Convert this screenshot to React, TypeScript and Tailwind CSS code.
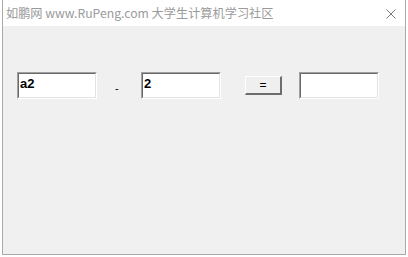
import React from 'react';

function TextBox({ value }: { value?: string }) {
  return (
    <div className="h-[27px] w-[80px] border-t border-l border-b border-r border-t-[#a0a0a0] border-l-[#a0a0a0] border-b-white border-r-white">
      <div className="h-full w-full border-t border-l border-b border-r border-t-[#696969] border-l-[#696969] border-b-[#e3e3e3] border-r-[#e3e3e3] bg-white pl-[1px] pt-[2px]">
        <span className="block font-['Liberation_Sans',sans-serif] text-[13px] font-bold leading-[15px] text-black">
          {value}
        </span>
      </div>
    </div>
  );
}

export default function App() {
  return (
    <div className="h-[257px] w-[408px] bg-white">
      <div className="ml-[2px] flex h-[255px] w-[404px] flex-col border-x border-b border-[#aaaaaa]">
        <div className="flex h-[26px] items-center justify-between bg-white pl-[3px] pr-[9px]">
          <span className="font-['Noto_Sans_CJK_SC',sans-serif] text-[12.2px] leading-none text-[#9a9a9a]">
            如鹏网 www.RuPeng.com 大学生计算机学习社区
          </span>
          <svg width="10" height="10" viewBox="0 0 10 10" className="mt-[1px]">
            <path d="M0.5 0.5 L9.5 9.5 M9.5 0.5 L0.5 9.5" stroke="#7a7a7a" strokeWidth="1" fill="none" />
          </svg>
        </div>
        <div className="flex-1 bg-[#f0f0f0] pl-[14px] pt-[46px]">
          <div className="flex items-center">
            <TextBox value="a2" />
            <span className="ml-[18px] mt-[6px] w-[4px] font-['Liberation_Sans',sans-serif] text-[11px] leading-none text-black">-</span>
            <div className="ml-[22px]">
              <TextBox value="2" />
            </div>
            <button className="ml-[24px] flex h-[19px] w-[37px] items-center justify-center border-t border-l border-b-2 border-r-2 border-t-white border-l-white border-b-[#6d6d6d] border-r-[#6d6d6d] bg-[#efefef] font-['Liberation_Sans',sans-serif] text-[12px] leading-none text-black">
              =
            </button>
            <div className="ml-[17px]">
              <TextBox />
            </div>
          </div>
        </div>
      </div>
    </div>
  );
}
